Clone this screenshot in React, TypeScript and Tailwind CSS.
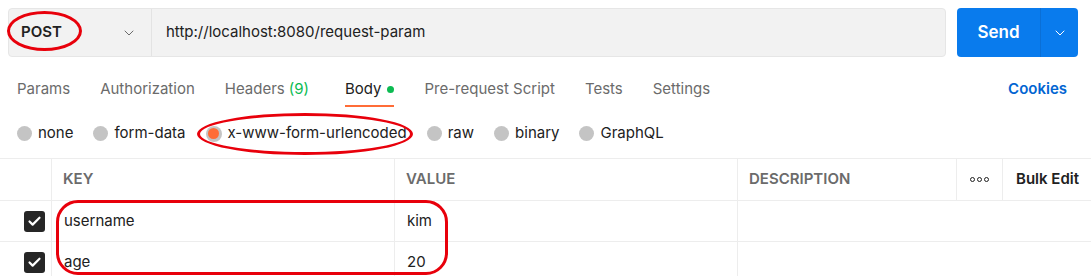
import { ChevronDown, Check } from "lucide-react";

const tabs = [
  { label: "Params" },
  { label: "Authorization" },
  { label: "Headers", count: "(9)" },
  { label: "Body", active: true },
  { label: "Pre-request Script" },
  { label: "Tests" },
  { label: "Settings" },
];

const bodyTypes = ["none", "form-data", "x-www-form-urlencoded", "raw", "binary", "GraphQL"];

const rows = [
  { key: "username", value: "kim" },
  { key: "age", value: "20" },
];

function Radio({ on }: { on?: boolean }) {
  return on ? (
    <span className="flex h-[16px] w-[16px] items-center justify-center rounded-full bg-[#c4c4c4]">
      <span className="h-[11px] w-[11px] rounded-full bg-[#ff6c37]" />
    </span>
  ) : (
    <span className="h-[15px] w-[15px] rounded-full bg-[#c4c4c4]" />
  );
}

export default function App() {
  return (
    <div
      className="relative h-[276px] w-[1091px] overflow-hidden bg-white text-[#212121]"
      style={{ fontFamily: "Inter, 'Noto Sans', sans-serif" }}
    >
      {/* request bar */}
      <div className="flex items-start pl-[8px] pt-[8px]">
        <div className="flex h-[49px] w-[938px] rounded-[4px] border border-[#e6e6e6] bg-[#f2f2f2]">
          <div className="flex w-[143px] items-center justify-between border-r border-[#e3e3e3] pl-[12px] pr-[14px]">
            <span className="text-[15px] font-semibold text-[#212121]">POST</span>
            <ChevronDown size={16} strokeWidth={1.5} className="text-[#6b6b6b]" />
          </div>
          <div className="flex items-center pl-[14px] text-[15px] text-[#212121]">
            http://localhost:8080/request-param
          </div>
        </div>
        <div className="ml-[11px] flex h-[49px] w-[121px] overflow-hidden rounded-[4px] bg-[#097bed] text-white">
          <div className="flex w-[84px] items-center justify-center border-r border-[#0a6fd6] text-[17px] font-semibold">
            Send
          </div>
          <div className="flex flex-1 items-center justify-center">
            <ChevronDown size={16} strokeWidth={1.5} />
          </div>
        </div>
      </div>

      {/* tabs */}
      <div className="mt-[13px] flex h-[37px] items-start justify-between pl-[17px] pr-[24px]">
        <div className="flex gap-[30px]">
          {tabs.map((t) => (
            <div
              key={t.label}
              className={`flex h-[37px] items-center gap-[6px] border-b-2 pt-[3px] text-[15px] ${
                t.active ? "border-[#ff6c37] text-[#212121]" : "border-transparent text-[#6b6b6b]"
              }`}
            >
              <span>
                {t.label}
                {t.count && <span className="ml-[4px] mr-[6px] text-[#0cbb52]">{t.count}</span>}
              </span>
              {t.active && <span className="h-[7px] w-[7px] rounded-full bg-[#0cbb52]" />}
            </div>
          ))}
        </div>
        <div className="flex h-[37px] items-center pt-[1px] text-[15px] font-semibold text-[#0265d2]">Cookies</div>
      </div>

      {/* body type */}
      <div className="flex h-[51px] items-center gap-[20px] pl-[17px] pt-[2px]">
        {bodyTypes.map((b) => (
          <div key={b} className="flex items-center gap-[6px] text-[15px] text-[#212121]">
            <Radio on={b === "x-www-form-urlencoded"} />
            <span>{b}</span>
          </div>
        ))}
      </div>

      {/* table */}
      <div className="border-t border-[#ededed]">
        <div className="flex h-[42px] border-b border-[#ededed] text-[15px] font-semibold">
          <div className="w-[52px] border-r border-[#ededed]" />
          <div className="flex w-[343px] items-center border-r border-[#ededed] pl-[11px] text-[#6b6b6b]">KEY</div>
          <div className="flex w-[343px] items-center border-r border-[#ededed] pl-[11px] text-[#6b6b6b]">VALUE</div>
          <div className="flex w-[219px] items-center border-r border-[#ededed] pl-[11px] text-[#6b6b6b]">
            DESCRIPTION
          </div>
          <div className="flex w-[46px] items-center justify-center gap-[2px] border-r border-[#ededed]">
            {[0, 1, 2].map((i) => (
              <span key={i} className="h-[5px] w-[5px] rounded-full border border-[#212121]" />
            ))}
          </div>
          <div className="flex flex-1 items-center pl-[13px] text-[#212121]">Bulk Edit</div>
        </div>
        {rows.map((r) => (
          <div key={r.key} className="flex h-[41px] border-b border-[#ededed] text-[15px]">
            <div className="flex w-[52px] items-center justify-end border-r border-[#ededed] pr-[6px]">
              <span className="flex h-[21px] w-[21px] items-center justify-center rounded-[3px] bg-[#262626]">
                <Check size={15} strokeWidth={3.5} className="text-white" />
              </span>
            </div>
            <div className="flex w-[343px] items-center border-r border-[#ededed] pl-[12px]">{r.key}</div>
            <div className="flex w-[343px] items-center border-r border-[#ededed] pl-[12px]">{r.value}</div>
            <div className="w-[219px]" />
            <div className="flex-1" />
          </div>
        ))}
      </div>

      {/* red annotation marks */}
      <div className="pointer-events-none absolute left-[7px] top-[11px] h-[40px] w-[75px] rounded-[50%] border-[3px] border-[#e8000b]" />
      <div className="pointer-events-none absolute left-[197px] top-[113px] h-[42px] w-[216px] rounded-[50%] border-[3px] border-[#e8000b]" />
      <div className="pointer-events-none absolute left-[56px] top-[200px] h-[75px] w-[392px] rounded-[22px] border-[3px] border-[#e8000b]" />
    </div>
  );
}
